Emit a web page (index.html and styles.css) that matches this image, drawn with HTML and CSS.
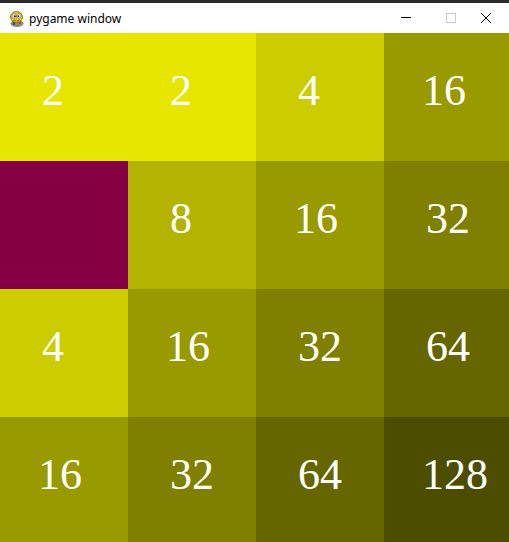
FILE: index.html
```html
<!DOCTYPE html>
<html lang="en">
<head>
  <meta charset="UTF-8">
  <title>pygame window</title>
  <link rel="stylesheet" href="styles.css">
</head>
<body>
  <div class="window">
    <div class="titlebar">
      <svg class="app-icon" width="17" height="18" viewBox="0 0 17 18">
        <ellipse cx="9" cy="13.5" rx="6.5" ry="3.5" fill="#8a8a8a"/>
        <rect x="5" y="12" width="2" height="3" fill="#444"/>
        <circle cx="12" cy="13" r="1" fill="#c33"/>
        <ellipse cx="8.5" cy="7" rx="6" ry="5.5" fill="#e8c51a" stroke="#7a6400" stroke-width="0.8"/>
        <circle cx="6.3" cy="6" r="2.2" fill="#fff" stroke="#555" stroke-width="0.5"/>
        <circle cx="10.8" cy="6" r="2.2" fill="#fff" stroke="#555" stroke-width="0.5"/>
        <circle cx="6.8" cy="6.3" r="1" fill="#111"/>
        <circle cx="10.3" cy="6.3" r="1" fill="#111"/>
        <path d="M5 10 Q8.5 12 12 10" stroke="#7a6400" stroke-width="0.8" fill="none"/>
      </svg>
      <span class="title">pygame window</span>
      <div class="controls">
        <span class="ctl ctl-min"><svg width="10" height="10" viewBox="0 0 10 10"><path d="M0 5.5H10" stroke="#000" stroke-width="1"/></svg></span>
        <span class="ctl ctl-max"><svg width="10" height="10" viewBox="0 0 10 10"><rect x="0.5" y="0.5" width="9" height="9" fill="none" stroke="#c8c8c8" stroke-width="1"/></svg></span>
        <span class="ctl ctl-close"><svg width="10" height="10" viewBox="0 0 10 10"><path d="M0 0L10 10M10 0L0 10" stroke="#000" stroke-width="1"/></svg></span>
      </div>
    </div>

    <div class="board">
      <div class="tile v2">2</div>
      <div class="tile v2">2</div>
      <div class="tile v4">4</div>
      <div class="tile v16 lead-one">16</div>

      <div class="tile empty"></div>
      <div class="tile v8">8</div>
      <div class="tile v16 lead-one">16</div>
      <div class="tile v32">32</div>

      <div class="tile v4">4</div>
      <div class="tile v16 lead-one">16</div>
      <div class="tile v32">32</div>
      <div class="tile v64">64</div>

      <div class="tile v16 lead-one">16</div>
      <div class="tile v32">32</div>
      <div class="tile v64">64</div>
      <div class="tile v128 lead-one">128</div>
    </div>
  </div>
</body>
</html>
```

FILE: styles.css
```css
html, body {
  margin: 0;
  padding: 0;
  overflow: hidden;
  background: #fff;
}
.window {
  width: 509px;
  height: 542px;
  overflow: hidden;
}
.titlebar {
  display: flex;
  align-items: center;
  height: 30px;
  border-top: 3px solid #2b2b2b;
  background: #fff;
  font-family: "Noto Sans", "DejaVu Sans", sans-serif;
  font-size: 12px;
  color: #000;
}
.app-icon {
  margin-left: 8px;
  margin-top: 1px;
}
.title {
  margin-left: 4px;
  margin-top: 1px;
}
.controls {
  display: flex;
  margin-left: auto;
  height: 100%;
}
.ctl {
  display: flex;
  align-items: center;
  justify-content: center;
  width: 46px;
  height: 100%;
}
.ctl svg {
  display: block;
}
.ctl-min {
  width: 45px;
  margin-top: -1px;
}
.ctl-close {
  width: 35px;
  justify-content: flex-start;
  padding-left: 7px;
  box-sizing: border-box;
}
.board {
  display: grid;
  grid-template-columns: repeat(4, 128px);
  grid-template-rows: repeat(4, 128px);
  width: 512px;
}
.tile {
  box-sizing: border-box;
  padding: 32px 0 0 42px;
  font-family: "Liberation Serif", "Times New Roman", serif;
  font-size: 44px;
  color: #fff;
}
.tile.lead-one {
  padding-left: 38px;
}
.empty { background: #850042; }
.v2 { background: #e6e600; }
.v4 { background: #cccc00; }
.v8 { background: #b3b300; }
.v16 { background: #999900; }
.v32 { background: #808000; }
.v64 { background: #666600; }
.v128 { background: #4d4d00; }
```
